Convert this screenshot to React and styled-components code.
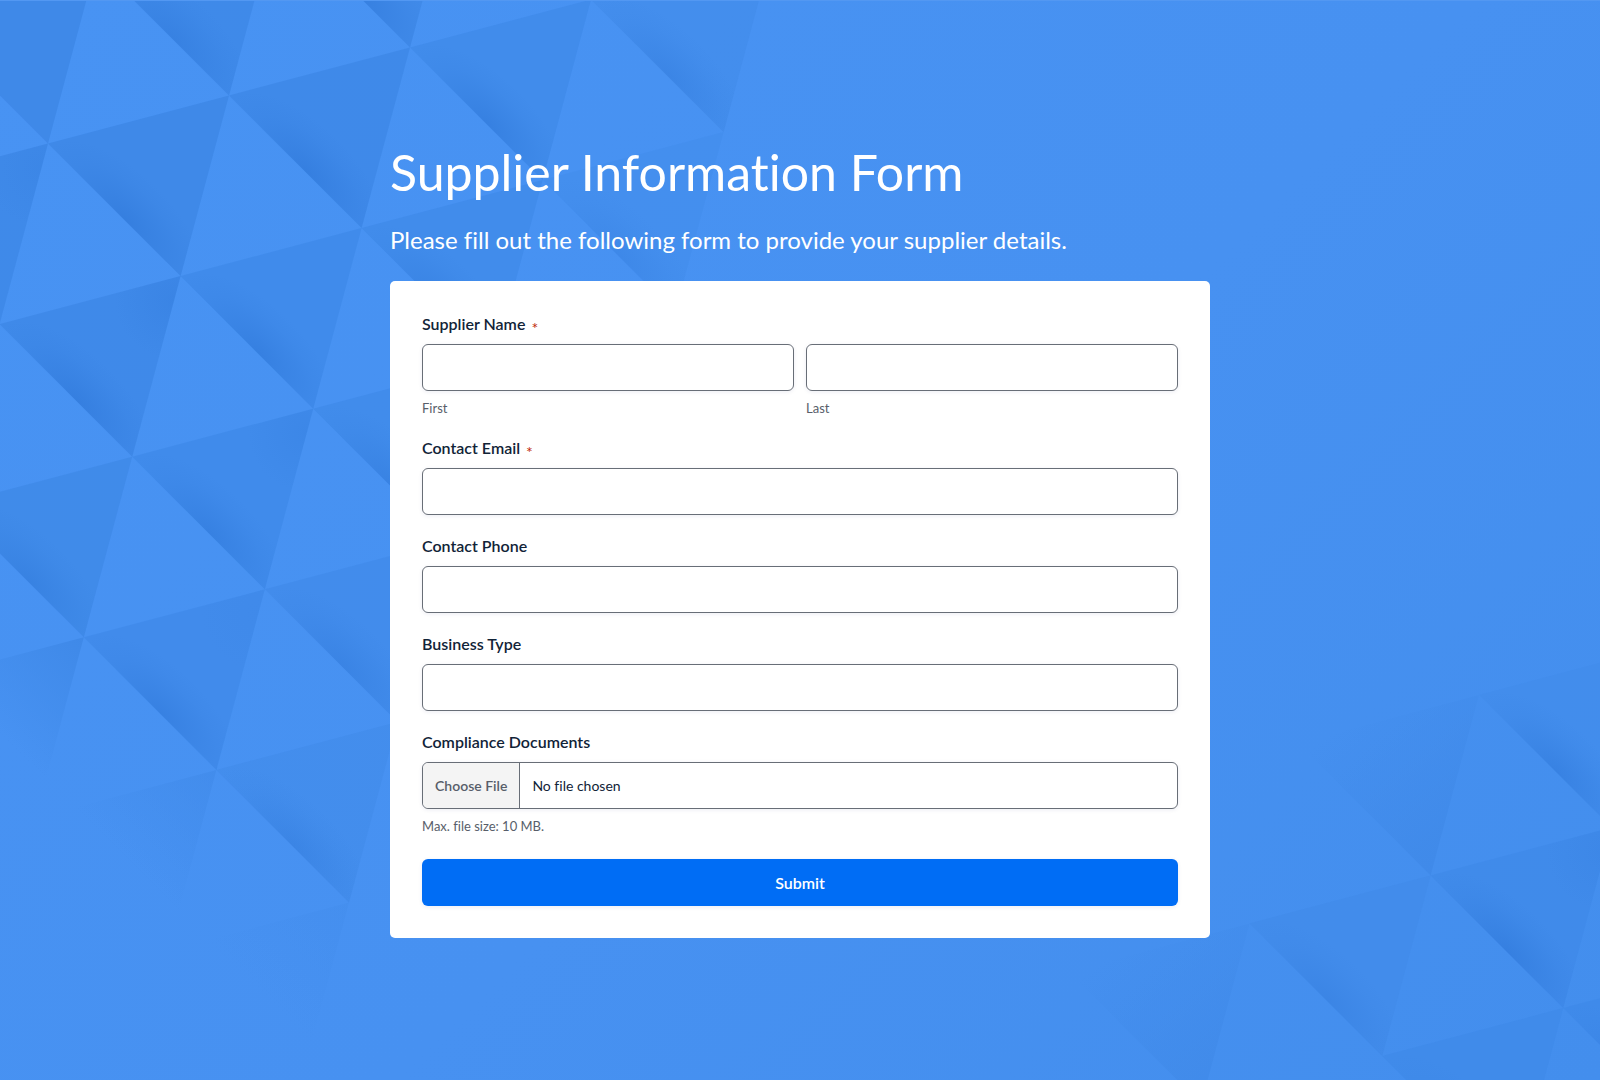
import React from "react";
import styled, { createGlobalStyle, css } from "styled-components";

const GlobalStyle = createGlobalStyle`
  *, *::before, *::after { box-sizing: border-box; }
  body {
    margin: 0;
    background: #4791f1;
    color: #112337;
    font-family: Lato, "Open Sans", sans-serif;
    font-variant-ligatures: none;
    -webkit-font-smoothing: antialiased;
  }
`;

const Page = styled.div`
  position: relative;
  min-height: 100vh;
  padding: 142px 24px;
  background: linear-gradient(135deg, #4893f3 0%, #4791f1 55%, #438eed 100%);
`;

const Backdrop = styled.svg`
  position: absolute;
  inset: 0;
  width: 100%;
  height: 100%;
`;

const Content = styled.main`
  position: relative;
  max-width: 820px;
  margin: 0 auto;
`;

const Title = styled.h1`
  margin: 0 0 22px;
  color: #fff;
  font-size: 50px;
  font-weight: 400;
  line-height: 60px;
`;

const Intro = styled.p`
  margin: 0 0 26px;
  color: #fff;
  font-size: 24px;
  line-height: 31px;
`;

const Card = styled.form`
  padding: 32px;
  border-radius: 5px;
  background: #fff;
`;

const Fields = styled.div`
  display: grid;
  gap: 20px;
  margin-bottom: 24px;
`;

const Field = styled.div`
  min-width: 0;
`;

const Group = styled.fieldset`
  min-width: 0;
  margin: 0;
  padding: 0;
  border: 0;
`;

const labelText = css`
  display: block;
  height: 21px;
  margin-bottom: 10px;
  padding: 0;
  color: #112337;
  font-size: 16px;
  font-weight: 600;
  line-height: 21px;
`;

const Label = styled.label`
  ${labelText}
`;

const Legend = styled.legend`
  ${labelText}
`;

const Required = styled.span`
  margin-left: 6px;
  color: #c02b0a;
  font-size: 16px;
  font-weight: 400;
  line-height: 12px;
  vertical-align: -4px;
`;

const NameRow = styled.div`
  display: grid;
  grid-template-columns: 1fr 1fr;
  gap: 12px;
`;

const box = css`
  display: block;
  width: 100%;
  height: 47px;
  border: 1px solid #686e77;
  border-radius: 6px;
  background: #fff;
  color: #112337;
  font-family: inherit;
  font-size: 14px;
  font-variant-ligatures: none;
  box-shadow: 0 1px 4px rgba(18, 25, 97, 0.08);
`;

const TextInput = styled.input`
  ${box}
  padding: 0 12px;
`;

const FileInput = styled.input`
  ${box}
  padding: 0;
  line-height: 45px;

  &::file-selector-button {
    height: 45px;
    margin: 0 12px 0 0;
    padding: 0 12px;
    border: 0;
    border-right: 1px solid #686e77;
    border-radius: 5px 0 0 5px;
    background: #f4f4f4;
    color: #585e6a;
    font-family: inherit;
    font-size: 14px;
    font-weight: 600;
  }
`;

const subText = css`
  display: block;
  margin: 8px 0 0;
  color: #585e6a;
  font-size: 13px;
  line-height: 18px;
`;

const SubLabel = styled.label`
  ${subText}
`;

const Hint = styled.p`
  ${subText}
`;

const Submit = styled.button`
  display: block;
  width: 100%;
  height: 47px;
  border: 0;
  border-radius: 6px;
  background: #006df5;
  color: #fff;
  font-family: inherit;
  font-size: 16px;
  font-weight: 600;
  box-shadow: 0 1px 4px rgba(18, 25, 97, 0.08);
`;

/* Facets of the triangle grid:
   [column, row, face opacity, edge shade, corner shade].
   Each facet is (P, P + A, P + B); the edge shade gathers along P to P + B,
   the corner shade around P + A. */
const A = [181, -48];
const B = [132.6, 132.6];

const LEFT = {
  origin: [48, 143.5],
  facets: [
    [0, -1, 1, 0], [1, -1, 0.95, 0.8], [2, -1, 0.9, 1],
    [-1, 0, 0.95, 0, 0.5], [0, 0, 1, 1], [1, 0, 0.95, 1], [2, 0, 0.75, 1], [3, 0, 0.5, 0.7],
    [-1, 1, 0.95, 1, 0.8], [0, 1, 0.8, 1], [1, 1, 0.75, 0.8], [2, 1, 0.35, 0.5],
    [-2, 2, 0.85, 0.8], [-1, 2, 0.8, 0.9, 0.6], [0, 2, 0.75, 0.8],
    [-2, 3, 0.7, 0.9, 0.2], [-1, 3, 0.6, 0.7],
    [-2, 4, 0.5, 0.7],
  ],
  fading: [[-3, 3, 1], [-3, 4, 0.6], [-3, 5, 0.3]],
};

const RIGHT = {
  origin: [1430.6, 875.5],
  facets: [
    [0, 0, 0.7, 1, 0.5], [-1, 0, 0.5, 0.6], [1, -1, 0.35, 0.9],
    [0, 1, 0.8, 0.8], [-1, 1, 0.75, 0.4], [1, 0, 0.7, 0.5],
  ],
  fading: [[0, -1, 0.85], [-2, 0, 0.75]],
};

function corners([ox, oy], i, j) {
  const x = ox + i * A[0] + j * B[0];
  const y = oy + i * A[1] + j * B[1];
  return [[x, y], [x + A[0], y + A[1]], [x + B[0], y + B[1]]];
}

function Facets({ name, grid }) {
  return (
    <g>
      {grid.facets.map(([i, j, face, shade, corner = 0]) => {
        const c = corners(grid.origin, i, j);
        const id = `${name}${i}_${j}`.replace(/-/g, "m");
        const cx = c[0][0] + B[0] * 0.58;
        const cy = c[0][1] + B[1] * 0.58;
        return (
          <g key={id}>
            <radialGradient
              id={id}
              gradientUnits="userSpaceOnUse"
              cx="0"
              cy="0"
              r="1"
              gradientTransform={`translate(${cx} ${cy}) rotate(45) scale(104 46)`}
            >
              <stop offset="0" stopColor="#2b74d6" stopOpacity="0.5" />
              <stop offset="0.35" stopColor="#2b74d6" stopOpacity="0.29" />
              <stop offset="0.7" stopColor="#2b74d6" stopOpacity="0.1" />
              <stop offset="1" stopColor="#2b74d6" stopOpacity="0" />
            </radialGradient>
            <polygon points={c.join(" ")} fill="#3f89e8" fillOpacity={face} />
            <polygon points={c.join(" ")} fill={`url(#${id})`} fillOpacity={shade} />
            {corner > 0 && (
              <>
                <radialGradient
                  id={`${id}c`}
                  gradientUnits="userSpaceOnUse"
                  cx={c[1][0] - 6}
                  cy={c[1][1] + 24}
                  r="60"
                >
                  <stop offset="0" stopColor="#2b74d6" stopOpacity="0.3" />
                  <stop offset="1" stopColor="#2b74d6" stopOpacity="0" />
                </radialGradient>
                <polygon points={c.join(" ")} fill={`url(#${id}c)`} fillOpacity={corner} />
              </>
            )}
          </g>
        );
      })}
      {grid.fading.map(([i, j, face]) => {
        const c = corners(grid.origin, i, j);
        const id = `${name}f${i}_${j}`.replace(/-/g, "m");
        const right = name === "r";
        return (
          <g key={id}>
            <linearGradient
              id={id}
              gradientUnits="userSpaceOnUse"
              x1={right ? c[2][0] : c[1][0]}
              y1={right ? c[2][1] : c[1][1]}
              x2={right ? c[0][0] + 20 : c[1][0] - 90}
              y2={right ? c[0][1] : c[1][1] + 90}
            >
              <stop offset="0" stopColor="#3f89e8" stopOpacity="1" />
              <stop offset="1" stopColor="#3f89e8" stopOpacity="0" />
            </linearGradient>
            <polygon points={c.join(" ")} fill={`url(#${id})`} fillOpacity={face} />
          </g>
        );
      })}
    </g>
  );
}

function LabelledInput({ id, label, required, type = "text" }) {
  return (
    <Field>
      <Label htmlFor={id}>
        {label}
        {required && <Required>*</Required>}
      </Label>
      <TextInput id={id} type={type} required={required} />
    </Field>
  );
}

export default function App() {
  return (
    <Page>
      <GlobalStyle />
      <Backdrop viewBox="0 0 1600 1080" preserveAspectRatio="xMinYMin slice" aria-hidden="true">
        <Facets name="l" grid={LEFT} />
        <Facets name="r" grid={RIGHT} />
        <rect width="1600" height="1" fill="#5398f2" />
      </Backdrop>
      <Content>
        <Title>Supplier Information Form</Title>
        <Intro>Please fill out the following form to provide your supplier details.</Intro>
        <Card onSubmit={(e) => e.preventDefault()}>
          <Fields>
            <Group>
              <Legend>
                Supplier Name<Required>*</Required>
              </Legend>
              <NameRow>
                <Field>
                  <TextInput id="first" type="text" required />
                  <SubLabel htmlFor="first">First</SubLabel>
                </Field>
                <Field>
                  <TextInput id="last" type="text" required />
                  <SubLabel htmlFor="last">Last</SubLabel>
                </Field>
              </NameRow>
            </Group>
            <LabelledInput id="email" label="Contact Email" type="email" required />
            <LabelledInput id="phone" label="Contact Phone" type="tel" />
            <LabelledInput id="business" label="Business Type" />
            <Field>
              <Label htmlFor="documents">Compliance Documents</Label>
              <FileInput id="documents" type="file" aria-describedby="documents-hint" />
              <Hint id="documents-hint">Max. file size: 10 MB.</Hint>
            </Field>
          </Fields>
          <Submit type="submit">Submit</Submit>
        </Card>
      </Content>
    </Page>
  );
}
